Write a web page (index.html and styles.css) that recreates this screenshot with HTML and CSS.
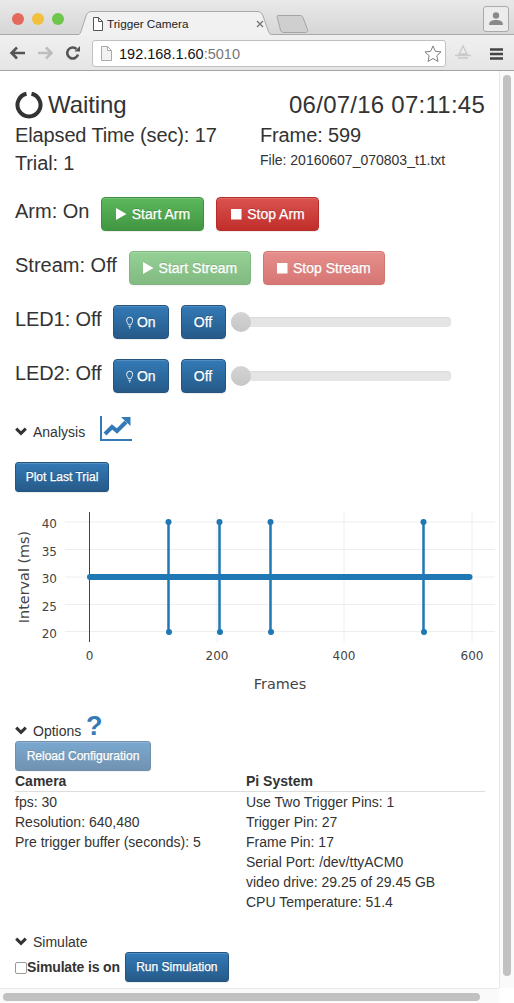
FILE: index.html
```html
<!DOCTYPE html>
<html lang="en">
<head>
<meta charset="utf-8">
<title>Trigger Camera</title>
<link rel="stylesheet" href="styles.css">
</head>
<body>
<div class="browser">
  <div class="tabstrip">
    <div class="lights"><i class="light red"></i><i class="light yellow"></i><i class="light green"></i></div>
    <div class="tab">
      <svg class="tabshape" width="208" height="28" viewBox="0 0 208 28"><path d="M0 24.500h2.500c3 0 4.500-1.500 5.500-4L13 5c1-2.800 2.500-4.500 6-4.500h165c3.500 0 5 1.700 6 4.500l5.500 15.500c1 2.500 2.500 4 5.500 4H208V28H0z" fill="#f1f1f1" stroke="#a9a9a9"/></svg>
      <svg class="pageicon" width="11" height="14" viewBox="0 0 11 14"><path d="M1.500.5h5l4 4v9h-9zM6.500.5v4h4" fill="#fff" stroke="#555"/></svg>
      <span class="tabtitle">Trigger Camera</span>
      <svg class="tabclose" width="8" height="8" viewBox="0 0 8 8"><path d="M1 1l6 6M7 1 1 7" stroke="#777" stroke-width="1.400"/></svg>
    </div>
    <svg class="newtab" width="33" height="18" viewBox="0 0 33 18"><path d="M1 1.500C1 1 1.500.5 2 .5h22c1.500 0 2.500.8 3 2l4.500 12c.5 1.200 0 3-2 3H8c-2 0-3-1-3.500-2.500z" fill="#cfcfcf" stroke="#a5a5a5"/></svg>
    <div class="profile"><svg width="16" height="14" viewBox="0 0 16 14"><circle cx="8" cy="3.500" r="3.200" fill="#8a8a8a"/><path d="M1 13c0-4 3-5 7-5s7 1 7 5z" fill="#8a8a8a"/></svg></div>
  </div>
  <div class="toolbar">
    <svg class="navicon" width="17" height="14" viewBox="0 0 17 14"><path d="M16 7H3M8 1.500 2.500 7 8 12.500" fill="none" stroke="#555" stroke-width="2.600"/></svg>
    <svg class="navicon" width="17" height="14" viewBox="0 0 17 14"><path d="M1 7h13M9 1.500 14.500 7 9 12.500" fill="none" stroke="#bdbdbd" stroke-width="2.600"/></svg>
    <svg class="navicon" width="16" height="16" viewBox="0 0 16 16"><path d="M13 9.500A5.500 5.500 0 1 1 11.500 4" fill="none" stroke="#555" stroke-width="2.600"/><path d="M9.500 6.500H15V1z" fill="#555"/></svg>
    <div class="omnibox">
      <svg width="11" height="15" viewBox="0 0 11 15"><path d="M.5.500h6l4 4v10H.5zM6.500.5v4h4" fill="#f2f2f2" stroke="#aaa"/></svg>
      <span class="url">192.168.1.60<span class="port">:5010</span></span>
      <svg class="star" width="18" height="17" viewBox="0 0 19 18"><path d="M9.500 1l2.500 5.700 6 .6-4.500 4.100 1.300 6-5.300-3.100-5.300 3.100 1.300-6L1 7.300l6-.6z" fill="#fff" stroke="#777"/></svg>
    </div>
    <svg class="ext" width="20" height="15" viewBox="0 0 20 15"><path d="M10 1 6 9h8zM2 10.500h16M5 13h10" fill="none" stroke="#c9c9c9" stroke-width="1.300"/></svg>
    <svg class="menu" width="13" height="12" viewBox="0 0 13 12"><path d="M0 1.500h13M0 6h13M0 10.500h13" stroke="#444" stroke-width="2.400"/></svg>
  </div>
</div>

<div class="window">
  <div class="viewport">
    <main class="page">
      <section class="status">
        <div class="statusrow">
          <div class="state"><svg class="spinner" width="28" height="28" viewBox="0 0 28 28"><path d="M11.500 2.800A11.500 11.500 0 1 0 16.500 2.800" fill="none" stroke="#333" stroke-width="4"/></svg><span>Waiting</span></div>
          <div class="clock">06/07/16 07:11:45</div>
        </div>
        <div class="stats">
          <div class="col">
            <div class="stat">Elapsed Time (sec): 17</div>
            <div class="stat">Trial: 1</div>
          </div>
          <div class="col">
            <div class="stat">Frame: 599</div>
            <div class="file">File: 20160607_070803_t1.txt</div>
          </div>
        </div>
      </section>

      <div class="control control-arm">
        <span class="label">Arm: On</span>
        <button class="btn green"><svg class="glyph" width="11" height="12" viewBox="0 0 11 12"><path d="M0 0l10.500 6L0 12z" fill="#fff"/></svg>Start Arm</button>
        <button class="btn red"><svg class="glyph" width="11" height="11" viewBox="0 0 11 11"><rect width="10.500" height="10.500" fill="#fff"/></svg>Stop Arm</button>
      </div>
      <div class="control control-stream">
        <span class="label">Stream: Off</span>
        <button class="btn green off"><svg class="glyph" width="11" height="12" viewBox="0 0 11 12"><path d="M0 0l10.500 6L0 12z" fill="#fff"/></svg>Start Stream</button>
        <button class="btn red off"><svg class="glyph" width="11" height="11" viewBox="0 0 11 11"><rect width="10.500" height="10.500" fill="#fff"/></svg>Stop Stream</button>
      </div>
      <div class="control control-led">
        <span class="label">LED1: Off</span>
        <button class="btn blue led-on"><svg class="bulb" width="8" height="13" viewBox="0 0 8 13"><path d="M2.500 9C2.300 7 .700 6.500.700 4a3.300 3.300 0 0 1 6.600 0c0 2.500-1.600 3-1.800 5zM2.800 11h2.400M3.300 12.500h1.400" fill="none" stroke="#fff"/></svg>On</button>
        <button class="btn blue led-off">Off</button>
        <div class="slider"><i class="handle"></i></div>
      </div>
      <div class="control control-led">
        <span class="label">LED2: Off</span>
        <button class="btn blue led-on"><svg class="bulb" width="8" height="13" viewBox="0 0 8 13"><path d="M2.500 9C2.300 7 .700 6.500.700 4a3.300 3.300 0 0 1 6.600 0c0 2.500-1.600 3-1.800 5zM2.800 11h2.400M3.300 12.500h1.400" fill="none" stroke="#fff"/></svg>On</button>
        <button class="btn blue led-off">Off</button>
        <div class="slider"><i class="handle"></i></div>
      </div>

      <div class="heading heading-analysis">
        <svg class="chev" width="12" height="9" viewBox="0 0 12 9"><path d="M1.200 1.600 6 6.400l4.800-4.800" fill="none" stroke="#333" stroke-width="3"/></svg>
        <span>Analysis</span>
        <svg class="charticon" width="32" height="25" viewBox="0 0 32 25"><path d="M1 0v24h31" fill="none" stroke="#337ab7" stroke-width="2"/><path d="M5 18l7-7 5 4 9-9" fill="none" stroke="#337ab7" stroke-width="4"/><path d="M21 1h9.500v9z" fill="#337ab7"/></svg>
      </div>
      <button class="btn blue small plot">Plot Last Trial</button>

      <svg class="chart" width="484" height="200" viewBox="0 0 484 200">
        <g class="grid">
          <path d="M202 12v130M329 12v130M457 12v130"/>
          <path d="M50 22h430M50 49.500h430M50 77h430M50 104.500h430M50 131.500h430"/>
        </g>
        <path d="M74.500 12v130" stroke="#444" fill="none"/>
        <g class="trace">
          <path d="M153.500 22v110M204.500 22v110M255.500 22v110M408.500 22v110" stroke-width="2.500"/>
          <path d="M75 77h379.500" stroke-width="6" stroke-linecap="round"/>
        </g>
        <g fill="#1f77b4">
          <circle cx="153.500" cy="22" r="3"/><circle cx="204.500" cy="22" r="3"/><circle cx="255.500" cy="22" r="3"/><circle cx="408.500" cy="22" r="3"/>
          <circle cx="154" cy="132" r="3"/><circle cx="205" cy="132" r="3"/><circle cx="256" cy="132" r="3"/><circle cx="409" cy="132" r="3"/>
        </g>
        <g class="ticks ticks-y">
          <text x="42" y="28">40</text><text x="42" y="56">35</text><text x="42" y="83">30</text><text x="42" y="111">25</text><text x="42" y="138">20</text>
        </g>
        <g class="ticks ticks-x">
          <text x="74.500" y="160">0</text><text x="202" y="160">200</text><text x="329" y="160">400</text><text x="457" y="160">600</text>
        </g>
        <text class="axis" x="265" y="189">Frames</text>
        <text class="axis" transform="translate(14 77) rotate(-90)" y="0" x="0">Interval (ms)</text>
      </svg>

      <div class="heading heading-options">
        <svg class="chev" width="12" height="9" viewBox="0 0 12 9"><path d="M1.200 1.600 6 6.400l4.800-4.800" fill="none" stroke="#333" stroke-width="3"/></svg>
        <span>Options</span>
        <span class="help">?</span>
      </div>
      <button class="btn blue small off reload">Reload Configuration</button>
      <div class="info">
        <div class="infocol camera">
          <div class="infohead">Camera</div>
          <div>fps: 30</div>
          <div>Resolution: 640,480</div>
          <div>Pre trigger buffer (seconds): 5</div>
        </div>
        <div class="infocol system">
          <div class="infohead">Pi System</div>
          <div>Use Two Trigger Pins: 1</div>
          <div>Trigger Pin: 27</div>
          <div>Frame Pin: 17</div>
          <div>Serial Port: /dev/ttyACM0</div>
          <div>video drive: 29.25 of 29.45 GB</div>
          <div>CPU Temperature: 51.4</div>
        </div>
      </div>
      <div class="heading heading-simulate">
        <svg class="chev" width="12" height="9" viewBox="0 0 12 9"><path d="M1.200 1.600 6 6.400l4.800-4.800" fill="none" stroke="#333" stroke-width="3"/></svg>
        <span>Simulate</span>
      </div>
      <div class="simrow">
        <i class="check"></i><strong class="simlabel">Simulate is on</strong>
        <button class="btn blue small run">Run Simulation</button>
      </div>
    </main>
    <div class="vbar"><i class="vthumb"></i></div>
  </div>
  <div class="hbar"><i class="hthumb"></i><i class="corner"></i></div>
</div>
</body>
</html>
```
FILE: styles.css
```css
* { box-sizing: border-box; }
html, body { margin: 0; height: 1003px; overflow: hidden; background: #fff; }
body { font-family: "Liberation Sans", Arial, sans-serif; font-size: 14px; line-height: 20px; color: #333; display: flex; flex-direction: column; }

.browser { height: 71px; flex: none; border-bottom: 1px solid #a4a4a4; background: #e6e6e6; }
.tabstrip { height: 35px; display: flex; align-items: flex-start; background: linear-gradient(#e9e9e9, #d6d6d6); border-radius: 5px 5px 0 0; border-bottom: 1px solid #a9a9a9; position: relative; padding-left: 12px; }
.lights { display: flex; gap: 8px; padding-top: 13px; }
.light { display: block; width: 12px; height: 12px; border-radius: 50%; }
.light.red { background: #e5685d; }
.light.yellow { background: #f2bf3e; }
.light.green { background: #6fc64c; }
.tab { position: absolute; left: 73px; top: 10px; width: 208px; height: 26px; display: flex; align-items: center; padding-left: 19px; }
.tabshape { position: absolute; left: 0; top: 1px; }
.pageicon { position: relative; margin-right: 4px; top: 1px; }
.tabtitle { position: relative; font-size: 11.700px; color: #222; top: 1px; }
.tabclose { position: absolute; left: 183px; top: 10px; }
.newtab { position: absolute; left: 276px; top: 15px; }
.profile { position: absolute; right: 5px; top: 6px; width: 26px; height: 26px; border: 1px solid #aaa; border-radius: 3px; background: #ececec; display: flex; align-items: center; justify-content: center; }

.toolbar { height: 35px; display: flex; align-items: center; padding-left: 9px; background: linear-gradient(#f0f0f0, #e5e5e5); position: relative; }
.navicon { margin-right: 11px; flex: none; }
.omnibox { position: absolute; left: 92px; top: 5px; width: 354px; height: 27px; background: #fff; border: 1px solid #c0c0c0; border-radius: 3px; display: flex; align-items: center; padding-left: 8px; }
.url { font-size: 14.500px; color: #111; margin-left: 7px; }
.port { color: #777; }
.star { margin-left: auto; margin-right: 3px; }
.ext { position: absolute; left: 453px; top: 10px; }
.menu { position: absolute; left: 490px; top: 13px; }

.window { flex: 1; display: flex; flex-direction: column; min-height: 0; }
.viewport { flex: 1; display: flex; min-height: 0; }
.page { flex: 1; padding: 0 14px 0 15px; min-width: 0; overflow: hidden; }
.vbar { width: 15px; flex: none; background: #fafafa; border-left: 1px solid #e8e8e8; padding: 4px 3px 0 3px; }
.vthumb { display: block; height: 901px; background: #c1c1c1; border-radius: 4px; }
.hbar { height: 15px; flex: none; background: #fafafa; border-top: 1px solid #e8e8e8; padding: 4px 34px 0 3px; position: relative; }
.hthumb { display: block; height: 8px; background: #c1c1c1; border-radius: 4px; }
.corner { position: absolute; right: 0; top: -1px; width: 15px; height: 15px; background: #fff; }

.status { padding-top: 14px; }
.statusrow { display: flex; justify-content: space-between; align-items: center; font-size: 24px; height: 36px; padding-top: 3px; }
.state { display: flex; align-items: center; gap: 5px; letter-spacing: -.1px; }
.clock { font-size: 24px; letter-spacing: .25px; }
.stats { display: flex; font-size: 20px; }
.col { width: 245px; flex: none; display: flex; flex-direction: column; }
.stat { height: 28px; line-height: 28px; letter-spacing: -.13px; }
.file { font-size: 14px; line-height: 18px; padding-top: 2px; }

.control { display: flex; align-items: center; height: 34px; margin-top: 20px; }
.label { font-size: 20px; white-space: nowrap; position: relative; top: -3px; margin-right: 12px; }
.btn { font: 14px/20px "Liberation Sans", Arial, sans-serif; height: 34px; padding: 0 12px; border: 1px solid transparent; border-radius: 4px; color: #fff; text-shadow: 0 -1px 0 rgba(0,0,0,.2); -webkit-text-stroke: .25px #fff; display: inline-flex; align-items: center; justify-content: center; white-space: nowrap; box-shadow: inset 0 1px 0 rgba(255,255,255,.15), 0 1px 1px rgba(0,0,0,.075); flex: none; }
.btn.off { opacity: .65; }
.btn.green { background: linear-gradient(#5cb85c, #419641); border-color: #3e8f3e; }
.btn.red { background: linear-gradient(#d9534f, #c12e2a); border-color: #b92c28; }
.btn.blue { background: linear-gradient(#337ab7, #265a88); border-color: #245580; }
.btn.small { height: 30px; font-size: 12px; padding: 0 10px; border-radius: 3px; }
.glyph { margin-right: 5px; }
.bulb { margin-right: 4px; }
.control-arm .btn, .control-stream .btn { width: 103px; margin-right: 12px; }
.control-stream .btn { width: 122px; }
.control-led .label { margin-right: 11px; letter-spacing: -.1px; }
.led-on { width: 56px; margin-right: 12px; }
.led-off { width: 45px; margin-right: 5px; }
.slider { width: 220px; height: 10px; background: #e5e5e5; border-radius: 4px; box-shadow: inset 0 1px 2px rgba(0,0,0,.05); position: relative; }
.handle { position: absolute; left: 0; top: -5px; width: 20px; height: 20px; border-radius: 50%; background: linear-gradient(#d4d4d4, #c6c6c6); }

.heading { display: flex; align-items: center; height: 20px; }
.heading .chev { margin-right: 6px; position: relative; top: -1px; }
.heading-analysis { margin-top: 29px; position: relative; }
.charticon { position: absolute; left: 85px; top: -6px; }
.plot { width: 94px; margin-top: 20px; display: flex; }
.chart { display: block; margin-top: 8px; }
.chart .grid path { stroke: #eee; fill: none; }
.trace path { stroke: #1f77b4; fill: none; }
.ticks text, .axis { font-family: "DejaVu Sans", Verdana, sans-serif; fill: #444; }
.ticks text { font-size: 12px; }
.ticks-y text { text-anchor: end; }
.ticks-x text { text-anchor: middle; }
.axis { font-size: 14.400px; text-anchor: middle; }

.heading-options { margin-top: 21px; position: relative; }
.help { position: absolute; left: 71px; top: -8px; font-size: 27px; line-height: 27px; font-weight: bold; color: #337ab7; }
.reload { width: 136px; display: flex; }
.info { display: flex; }
.infocol { display: flex; flex-direction: column; }
.camera { width: 231px; }
.system { width: 239px; }
.infohead { font-weight: bold; height: 21px; border-bottom: 1px solid #ddd; }
.heading-simulate { margin-top: 20px; }
.simrow { display: flex; align-items: center; height: 30px; }
.simlabel { letter-spacing: -.15px; }
.check { display: block; width: 12px; height: 12px; border: 1px solid #999; border-radius: 2px; background: #fff; margin-top: 1px; }
.run { width: 104px; margin-left: 5px; }
```
